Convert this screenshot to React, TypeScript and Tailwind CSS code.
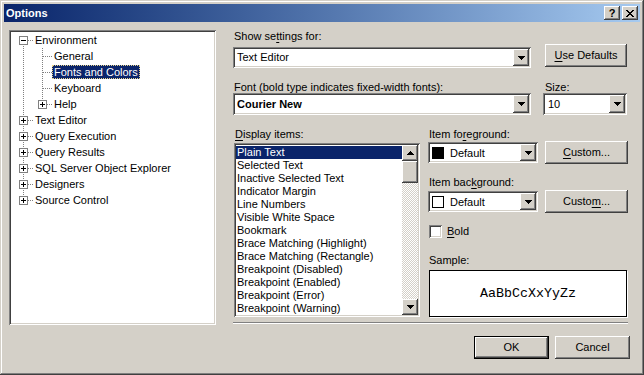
import React from "react";

// classic 3D borders
const raised =
  "shadow-[inset_-1px_-1px_0_#404040,inset_1px_1px_0_#ffffff,inset_-2px_-2px_0_#808080]";
const sunken =
  "shadow-[inset_1px_1px_0_#808080,inset_-1px_-1px_0_#ffffff,inset_2px_2px_0_#404040,inset_-2px_-2px_0_#d4d0c8]";

function Arrow({ up }: { up?: boolean }) {
  return (
    <svg width="7" height="4" viewBox="0 0 7 4" shapeRendering="crispEdges">
      <path
        d={
          up
            ? "M3 0h1v1H3zM2 1h3v1H2zM1 2h5v1H1zM0 3h7v1H0z"
            : "M0 0h7v1H0zM1 1h5v1H1zM2 2h3v1H2zM3 3h1v1H3z"
        }
        fill="#000"
      />
    </svg>
  );
}

function DropButton() {
  return (
    <div className={`w-[16px] h-full shrink-0 bg-[#d4d0c8] ${raised} flex items-center justify-center`}>
      <Arrow />
    </div>
  );
}

function Key({ children }: { children: React.ReactNode }) {
  return <span className="underline underline-offset-[2px]">{children}</span>;
}

type Vert = "full" | "top" | "bottom";

function Cell({ w, c, v, h, box }: { w: number; c: number; v?: Vert; h?: boolean; box?: "plus" | "minus" }) {
  return (
    <svg width={w} height={16} className="shrink-0" shapeRendering="crispEdges">
      {v && (
        <line
          x1={c + 0.5}
          x2={c + 0.5}
          y1={v === "bottom" ? 8 : 0}
          y2={v === "top" ? 9 : 16}
          stroke="#808080"
          strokeDasharray="1 1"
        />
      )}
      {h && <line x1={c + 1} x2={w} y1={8.5} y2={8.5} stroke="#808080" strokeDasharray="1 1" />}
      {box && (
        <>
          <rect x={c - 3.5} y={4.5} width={8} height={8} fill="#fff" stroke="#808080" />
          <rect x={c - 2} y={8} width={5} height={1} fill="#000" />
          {box === "plus" && <rect x={c} y={6} width={1} height={5} fill="#000" />}
        </>
      )}
    </svg>
  );
}

function TreeRow({ cells, label, selected }: { cells: React.ReactNode; label: string; selected?: boolean }) {
  return (
    <div className="flex items-center h-[16px]">
      {cells}
      <span
        className={
          selected
            ? "px-[2px] leading-[14px] bg-[#0a246a] text-white outline-1 outline-dotted -outline-offset-1 outline-[#e8d48a]"
            : "px-[2px] leading-[14px]"
        }
      >
        {label}
      </span>
    </div>
  );
}

const displayItems = [
  "Plain Text",
  "Selected Text",
  "Inactive Selected Text",
  "Indicator Margin",
  "Line Numbers",
  "Visible White Space",
  "Bookmark",
  "Brace Matching (Highlight)",
  "Brace Matching (Rectangle)",
  "Breakpoint (Disabled)",
  "Breakpoint (Enabled)",
  "Breakpoint (Error)",
  "Breakpoint (Warning)",
];

const rootTail = ["Text Editor", "Query Execution", "Query Results", "SQL Server Object Explorer", "Designers"];

export default function App() {
  return (
    <div className="w-[644px] h-[375px] bg-[#d4d0c8] p-[4px] flex flex-col text-[11px] text-black font-['Liberation_Sans',Arial,sans-serif] shadow-[inset_-1px_-1px_0_#404040,inset_1px_1px_0_#d4d0c8,inset_-2px_-2px_0_#808080,inset_2px_2px_0_#ffffff]">
      {/* title bar */}
      <div className="h-[18px] shrink-0 flex items-center bg-linear-to-r from-[#0a246a] to-[#a6caf0] pl-[2px] pr-[2px]">
        <span className="text-white font-bold leading-[14px]">Options</span>
        <div className="ml-auto flex">
          <div className={`w-[16px] h-[14px] bg-[#d4d0c8] ${raised} flex items-center justify-center font-bold leading-[12px] text-[11px]`}>
            ?
          </div>
          <div className={`w-[16px] h-[14px] ml-[2px] bg-[#d4d0c8] ${raised} flex items-center justify-center`}>
            <svg width="8" height="7" viewBox="0 0 8 7" shapeRendering="crispEdges">
              <path
                d="M0 0h2v1H0zM6 0h2v1H6zM1 1h2v1H1zM5 1h2v1H5zM2 2h4v1H2zM3 3h2v1H3zM2 4h4v1H2zM1 5h2v1H1zM5 5h2v1H5zM0 6h2v1H0zM6 6h2v1H6z"
                fill="#000"
              />
            </svg>
          </div>
        </div>
      </div>

      <div className="flex pl-[5px] pt-[8px]">
        {/* tree */}
        <div className={`w-[207px] h-[295px] shrink-0 bg-white ${sunken} p-[2px]`}>
          <TreeRow cells={<Cell w={22} c={12} v="bottom" h box="minus" />} label="Environment" />
          <TreeRow
            cells={
              <>
                <Cell w={22} c={12} v="full" />
                <Cell w={19} c={9} v="full" h />
              </>
            }
            label="General"
          />
          <TreeRow
            cells={
              <>
                <Cell w={22} c={12} v="full" />
                <Cell w={19} c={9} v="full" h />
              </>
            }
            label="Fonts and Colors"
            selected
          />
          <TreeRow
            cells={
              <>
                <Cell w={22} c={12} v="full" />
                <Cell w={19} c={9} v="full" h />
              </>
            }
            label="Keyboard"
          />
          <TreeRow
            cells={
              <>
                <Cell w={22} c={12} v="full" />
                <Cell w={19} c={9} v="top" h box="plus" />
              </>
            }
            label="Help"
          />
          {rootTail.map((t) => (
            <TreeRow key={t} cells={<Cell w={22} c={12} v="full" h box="plus" />} label={t} />
          ))}
          <TreeRow cells={<Cell w={22} c={12} v="top" h box="plus" />} label="Source Control" />
        </div>

        {/* settings */}
        <div className="ml-[17px] w-[397px] flex flex-col">
          <div className="h-[12px] leading-[12px] pl-[1px]">
            Show se<Key>t</Key>tings for:
          </div>
          <div className="mt-[2px] h-[23px] flex items-end">
            <div className={`w-[298px] h-[21px] bg-white ${sunken} p-[2px] flex mb-[-1px]`}>
              <span className="flex-1 pl-[2px] leading-[17px]">Text Editor</span>
              <DropButton />
            </div>
            <button className={`ml-[14px] w-[82px] h-[23px] bg-[#d4d0c8] ${raised}`}>
              <Key>U</Key>se Defaults
            </button>
          </div>

          <div className="mt-[14px] h-[12px] leading-[12px] flex">
            <span className="w-[310px] pl-[1px]">
              <Key>F</Key>ont (bold type indicates fixed-width fonts):
            </span>
            <span className="pl-[2px]">
              <Key>S</Key>ize:
            </span>
          </div>
          <div className="h-[22px] flex">
            <div className={`w-[298px] h-[22px] bg-white ${sunken} p-[2px] flex`}>
              <span className="flex-1 pl-[2px] leading-[18px] font-bold">Courier New</span>
              <DropButton />
            </div>
            <div className={`ml-[12px] w-[84px] h-[22px] bg-white ${sunken} p-[2px] flex`}>
              <span className="flex-1 pl-[3px] leading-[18px]">10</span>
              <DropButton />
            </div>
          </div>

          <div className="mt-[13px] flex">
            {/* display items */}
            <div className="ml-[1px] w-[186px] flex flex-col">
              <div className="h-[12px] leading-[12px] pl-[1px]">
                <Key>D</Key>isplay items:
              </div>
              <div className={`mt-[3px] h-[174px] bg-white ${sunken} p-[2px] flex`}>
                <div className="flex-1 pt-[1px]">
                  {displayItems.map((t, i) => (
                    <div
                      key={t}
                      className={
                        i === 0
                          ? "h-[13px] leading-[13px] pl-[1px] bg-[#0a246a] text-white"
                          : "h-[13px] leading-[13px] pl-[1px]"
                      }
                    >
                      {t}
                    </div>
                  ))}
                </div>
                <div className="w-[16px] flex flex-col">
                  <div className={`h-[16px] bg-[#d4d0c8] ${raised} flex items-center justify-center`}>
                    <Arrow up />
                  </div>
                  <div className={`h-[22px] bg-[#d4d0c8] ${raised}`} />
                  <div className="flex-1 bg-[repeating-conic-gradient(#ffffff_0_25%,#d4d0c8_0_50%)] bg-[length:2px_2px]" />
                  <div className={`h-[16px] bg-[#d4d0c8] ${raised} flex items-center justify-center`}>
                    <Arrow />
                  </div>
                </div>
              </div>
            </div>

            {/* colours */}
            <div className="ml-[8px] w-[201px] flex flex-col">
              <div className="h-[12px] leading-[12px] pl-[1px]">
                Item fo<Key>r</Key>eground:
              </div>
              <div className="mt-[1px] h-[23px] flex items-center">
                <div className={`w-[110px] h-[21px] bg-white ${sunken} p-[2px] flex`}>
                  <div className="flex-1 flex items-center pl-[2px]">
                    <span className="w-[12px] h-[12px] bg-black" />
                    <span className="ml-[6px] leading-[14px]">Default</span>
                  </div>
                  <DropButton />
                </div>
                <button className={`ml-[7px] w-[83px] h-[23px] bg-[#d4d0c8] ${raised}`}>
                  <Key>C</Key>ustom...
                </button>
              </div>

              <div className="mt-[12px] h-[12px] leading-[12px] pl-[1px]">
                Item bac<Key>k</Key>ground:
              </div>
              <div className="mt-[2px] h-[23px] flex items-center">
                <div className={`w-[110px] h-[21px] bg-white ${sunken} p-[2px] flex`}>
                  <div className="flex-1 flex items-center pl-[2px]">
                    <span className="w-[12px] h-[12px] bg-white border border-black" />
                    <span className="ml-[6px] leading-[14px]">Default</span>
                  </div>
                  <DropButton />
                </div>
                <button className={`ml-[7px] w-[83px] h-[23px] bg-[#d4d0c8] ${raised}`}>
                  Custo<Key>m</Key>...
                </button>
              </div>

              <div className="mt-[12px] h-[13px] flex items-center pl-[1px]">
                <span className={`w-[13px] h-[13px] bg-white ${sunken}`} />
                <span className="ml-[5px] leading-[13px]">
                  <Key>B</Key>old
                </span>
              </div>

              <div className="mt-[16px] h-[12px] leading-[12px] pl-[1px]">Sample:</div>
              <div className="mt-[4px] ml-[1px] w-[198px] h-[47px] bg-white border border-black shadow-[1px_1px_0_#ffffff] flex items-center justify-center">
                <span className="text-[13.33px] font-['Liberation_Mono',monospace]">AaBbCcXxYyZz</span>
              </div>
            </div>
          </div>

          <div className="mt-[5px] w-[395px] h-[2px] border-t border-[#808080] border-b border-b-white" />

          <div className="mt-[12px] flex justify-end gap-[6px]">
            <button className={`w-[75px] h-[23px] bg-[#d4d0c8] border border-black ${raised}`}>OK</button>
            <button className={`w-[75px] h-[23px] bg-[#d4d0c8] ${raised}`}>Cancel</button>
          </div>
        </div>
      </div>
    </div>
  );
}
